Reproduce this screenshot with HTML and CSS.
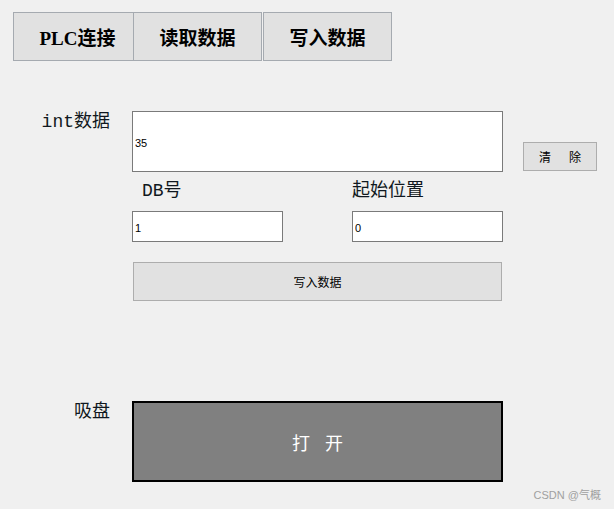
FILE: index.html
```html
<!DOCTYPE html>
<html lang="zh">
<head>
<meta charset="utf-8">
<title>PLC</title>
<link rel="stylesheet" href="styles.css">
</head>
<body>
<div class="page">
  <div class="tabs">
    <div class="tab t1">PLC连接</div>
    <div class="tab t2">读取数据</div>
    <div class="tab t3">写入数据</div>
  </div>

  <div class="form">
    <div class="label">int数据</div>
    <input class="field area" type="text" value="35">
    <div class="spacer"></div>
    <button class="btn clear"><span>清</span><span>除</span></button>

    <div class="label"></div>
    <div class="block">
      <div class="sub-label db">DB号</div>
      <div></div>
      <div class="sub-label">起始位置</div>
      <input class="field small" type="text" value="1">
      <div></div>
      <input class="field small" type="text" value="0">
      <button class="btn write">写入数据</button>
    </div>
    <div class="spacer"></div>
    <div></div>

    <div class="label suction">吸盘</div>
    <button class="open"><span>打</span><span>开</span></button>
  </div>

  <div class="watermark">CSDN @气概</div>
</div>
</body>
</html>
```

FILE: styles.css
```css
html, body {
  margin: 0;
  padding: 0;
  background: #f0f0f0;
  height: 100%;
}

.page {
  position: relative;
  width: 614px;
  height: 509px;
  box-sizing: border-box;
  padding: 12px 0 0 13px;
  font-family: "Liberation Serif", "Noto Sans CJK SC", serif;
  color: #000;
}

.tabs {
  display: flex;
  height: 49px;
}

.tab {
  box-sizing: border-box;
  height: 49px;
  border: 1px solid #a5aab0;
  background: #e1e1e1;
  display: flex;
  align-items: center;
  justify-content: center;
  font-weight: bold;
  font-size: 19px;
}

.t1 { width: 121px; padding-left: 8px; }
.t2 { width: 128px; border-left: none; }
.t3 { width: 129px; margin-left: 1px; }

.form {
  display: grid;
  grid-template-columns: 119px 371px 20px 74px;
  margin-top: 50px;
  align-items: start;
}

.label {
  text-align: right;
  padding-right: 22px;
  font-family: "Liberation Mono", "Noto Sans CJK SC", monospace;
  font-size: 18px;
  line-height: 21px;
  padding-top: 1px;
  color: #101820;
}

.field {
  box-sizing: border-box;
  margin: 0;
  border: 1px solid #7a7a7a;
  background: #fff;
  padding: 0 0 0 2px;
  font-family: "Liberation Sans", Arial, sans-serif;
  font-size: 11px;
  color: #000;
  outline: none;
}

.area {
  width: 371px;
  height: 61px;
  padding-top: 3px;
}

.btn {
  box-sizing: border-box;
  margin: 0;
  border: 1px solid #adadad;
  background: #e1e1e1;
  font-family: "Noto Sans CJK SC", sans-serif;
  font-size: 12px;
  color: #000;
  padding: 0;
}

.clear {
  width: 74px;
  height: 29px;
  margin-top: 31px;
  display: flex;
  align-items: center;
  justify-content: center;
  gap: 18px;
}

.block {
  display: grid;
  grid-template-columns: 151px 69px 151px;
  grid-template-rows: 39px 31px;
}

.sub-label {
  font-family: "Liberation Mono", "Noto Sans CJK SC", monospace;
  font-size: 18px;
  line-height: 21px;
  padding-top: 9px;
  color: #101820;
}

.db { padding-left: 10px; }

.small {
  width: 151px;
  height: 31px;
  padding-top: 2px;
}

.write {
  grid-column: 1 / 4;
  width: 369px;
  height: 39px;
  margin: 20px 0 0 1px;
}

.suction {
  margin-top: 100px;
}

.open {
  box-sizing: border-box;
  margin: 100px 0 0 0;
  width: 371px;
  height: 81px;
  border: 2px solid #000;
  background: #808080;
  color: #fff;
  font-family: "Liberation Serif", "Noto Sans CJK SC", serif;
  font-size: 18px;
  padding: 0;
  display: flex;
  align-items: center;
  justify-content: center;
  gap: 15px;
}

.watermark {
  position: absolute;
  right: 13px;
  top: 486px;
  font-family: "Liberation Sans", "Noto Sans CJK SC", sans-serif;
  font-size: 11px;
  color: #a0a0a0;
}
```
